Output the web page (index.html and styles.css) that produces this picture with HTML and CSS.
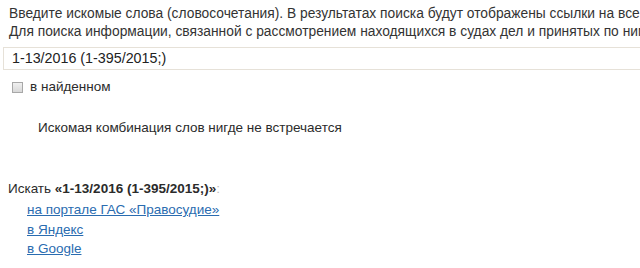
FILE: index.html
```html
<!DOCTYPE html>
<html lang="ru">
<head>
    <meta charset="UTF-8">
    <title>Поиск</title>
    <link rel="stylesheet" href="styles.css">
</head>
<body>
    <div class="searchForm">
        <div class="hint">
            <div class="hintLine">Введите искомые слова (словосочетания). В результатах поиска будут отображены ссылки на все страницы сайта, содержащие эти слова.</div>
            <div class="hintLine">Для поиска информации, связанной с рассмотрением находящихся в судах дел и принятых по ним судебных актов, воспользуйтесь разделом «Судебное делопроизводство».</div>
        </div>
        <div class="queryBox">1-13/2016 (1-395/2015;)</div>
        <label class="inFound"><span class="checkBox"></span>в найденном</label>
    </div>
    <div class="notFound">Искомая комбинация слов нигде не встречается</div>
    <div class="searchElsewhere">
        <div class="searchTitle">Искать <b>«1-13/2016 (1-395/2015;)»</b><span class="colon">:</span></div>
        <ul class="searchLinks">
            <li><a href="#">на портале ГАС «Правосудие»</a></li>
            <li><a href="#">в Яндекс</a></li>
            <li><a href="#">в Google</a></li>
        </ul>
    </div>
</body>
</html>
```

FILE: styles.css
```css
html, body {
    font-family: "Liberation Sans", Arial, sans-serif;
    font-size: 13.5px;
    color: #2b2b2b;
    margin: 0;
    padding: 0;
    background: #fff;
    overflow: hidden;
}
div.searchForm {
    padding: 5px 0 0 0;
}
div.hint {
    padding-left: 9px;
    width: 631px;
    overflow: hidden;
    white-space: nowrap;
    font-size: 13.8px;
    line-height: 18px;
    color: #333;
}
div.queryBox {
    margin: 6px 0 0 3px;
    height: 21px;
    line-height: 21px;
    padding-left: 8px;
    border: 1px solid #e6e1d8;
    border-right: none;
    font-size: 14.3px;
    color: #222;
}
label.inFound {
    display: flex;
    align-items: center;
    gap: 7px;
    margin: 9px 0 0 12px;
    line-height: 16px;
}
span.checkBox {
    width: 9px;
    height: 9px;
    border: 1px solid #a8a8a8;
    background: linear-gradient(#f0f0f0, #d8d8d8);
}
div.notFound {
    margin: 25px 0 0 38px;
    line-height: 16px;
}
div.searchElsewhere {
    margin: 45px 0 0 8px;
}
div.searchTitle {
    line-height: 16px;
}
div.searchTitle b {
    color: #2b2b2b;
}
span.colon {
    color: #bbb;
}
ul.searchLinks {
    list-style: none;
    margin: 3px 0 0 0;
    padding: 0 0 0 19px;
}
ul.searchLinks li {
    line-height: 19.5px;
}
ul.searchLinks a {
    color: #2a6cb0;
    text-decoration: underline;
}
```
